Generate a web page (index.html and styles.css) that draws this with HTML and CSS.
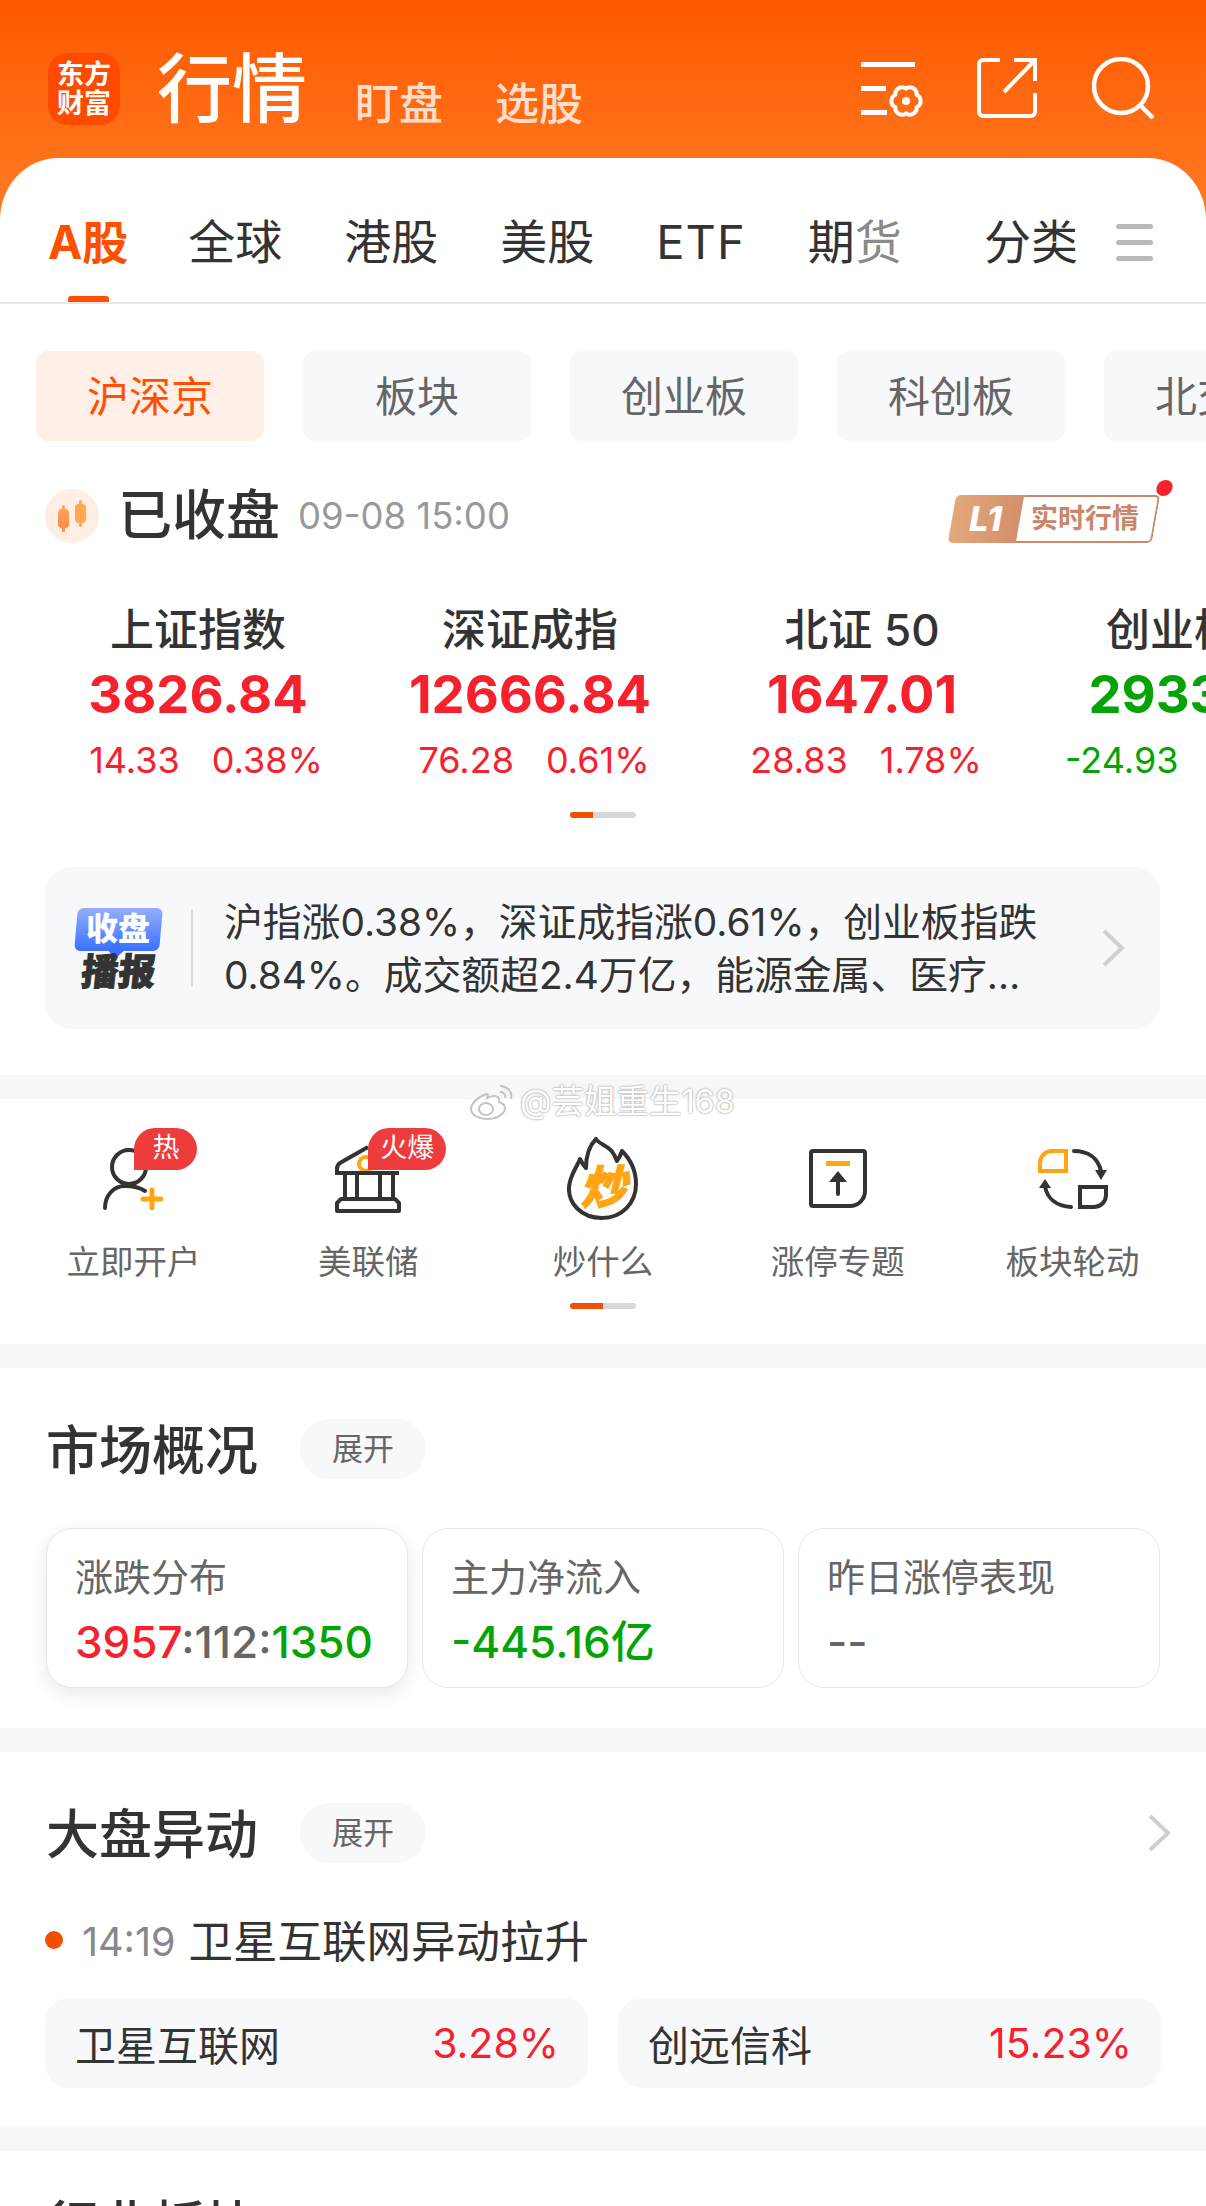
FILE: index.html
```html
<!DOCTYPE html>
<html lang="zh-CN">
<head>
    <meta charset="UTF-8">
    <meta name="viewport" content="width=device-width, initial-scale=1.0">
    <title>行情</title>
    <link rel="stylesheet" href="styles.css">
</head>
<body>
<div class="page">
    <div class="top">
        <div class="bar">
            <div class="logo">东方<br>财富</div>
            <div class="bar-title">行情</div>
            <div class="bar-link bar-link-first">盯盘</div>
            <div class="bar-link">选股</div>
            <div class="bar-icons">
                <svg class="icon-gear" width="64" height="58" viewBox="0 0 64 58" fill="none" stroke="#fff">
                    <path d="M0 2.5H54M0 26.5H25M0 50.500H26" stroke-width="5"/>
                    <g transform="translate(45 39)" stroke-width="4">
                        <path d="M0 -12.500A7 7 0 0 1 10.800 -6.250A7 7 0 0 1 10.800 6.250A7 7 0 0 1 0 12.500A7 7 0 0 1 -10.800 6.250A7 7 0 0 1 -10.800 -6.250A7 7 0 0 1 0 -12.500Z"/>
                        <circle r="4" fill="#fff" stroke="none"/>
                    </g>
                </svg>
                <svg class="icon-share" width="60" height="60" viewBox="0 0 60 60" fill="none" stroke="#fff" stroke-width="4">
                    <path d="M23 2H6A4 4 0 0 0 2 6V54A4 4 0 0 0 6 58H54A4 4 0 0 0 58 54V35"/>
                    <path d="M37 2H58V23M58 2L27 34"/>
                </svg>
                <svg class="icon-search" width="64" height="62" viewBox="0 0 64 62" fill="none" stroke="#fff" stroke-width="4.500">
                    <ellipse cx="29" cy="29" rx="27" ry="27"/>
                    <path d="M49 49L61 61"/>
                </svg>
            </div>
        </div>
        <div class="tabs">
            <div class="tab tab-active">A股</div>
            <div class="tab">全球</div>
            <div class="tab">港股</div>
            <div class="tab">美股</div>
            <div class="tab tab-latin">ETF</div>
            <div class="tab">期<span class="tab-fade">货</span></div>
            <div class="tab tab-more">分类</div>
            <div class="burger"><i></i><i></i><i></i></div>
        </div>
    </div>

    <section class="quotes">
        <div class="pills">
            <div class="pill pill-active">沪深京</div>
            <div class="pill">板块</div>
            <div class="pill">创业板</div>
            <div class="pill">科创板</div>
            <div class="pill">北交所</div>
        </div>

        <div class="status">
            <div class="candle-icon">
                <svg width="54" height="54" viewBox="0 0 54 54">
                    <defs>
                        <linearGradient id="candleA" x1="0" y1="0" x2="0" y2="1"><stop offset="0" stop-color="#ffa45c"/><stop offset="1" stop-color="#ff8a45"/></linearGradient>
                    </defs>
                    <rect x="13" y="20" width="11" height="19" rx="4" fill="url(#candleA)"/>
                    <rect x="17" y="16" width="3" height="27" rx="1.500" fill="url(#candleA)"/>
                    <rect x="30" y="15" width="11" height="19" rx="4" fill="#ffa850"/>
                    <rect x="34" y="11" width="3" height="27" rx="1.500" fill="#ffa850"/>
                </svg>
            </div>
            <div class="status-text">已收盘</div>
            <div class="status-time">09-08 15:00</div>
            <div class="level-badge">
                <div class="level-left"><span>L1</span></div>
                <div class="level-right"><span>实时行情</span></div>
                <div class="level-dot"></div>
            </div>
        </div>

        <div class="indexes">
            <div class="index up">
                <div class="index-name">上证指数</div>
                <div class="index-value">3826.84</div>
                <div class="index-sub"><span>14.33</span><span>0.38%</span></div>
            </div>
            <div class="index up">
                <div class="index-name">深证成指</div>
                <div class="index-value">12666.84</div>
                <div class="index-sub"><span>76.28</span><span>0.61%</span></div>
            </div>
            <div class="index up">
                <div class="index-name">北证 50</div>
                <div class="index-value">1647.01</div>
                <div class="index-sub"><span>28.83</span><span>1.78%</span></div>
            </div>
            <div class="index down">
                <div class="index-name">创业板指</div>
                <div class="index-value">2933.62</div>
                <div class="index-sub"><span>-24.93</span><span>-0.84%</span></div>
            </div>
        </div>

        <div class="slider slider-index"><i></i></div>

        <div class="report">
            <div class="report-logo">
                <div class="report-bubble"><span>收盘</span></div>
                <div class="report-word">播报</div>
            </div>
            <div class="report-line"></div>
            <div class="report-text">沪指涨0.38%，深证成指涨0.61%，创业板指跌0.84%。成交额超2.4万亿，能源金属、医疗…</div>
            <svg class="chevron" width="24" height="38" viewBox="0 0 24 38" fill="none" stroke="#d0d0d0" stroke-width="4">
                <path d="M3 2L21 19L3 36"/>
            </svg>
        </div>
    </section>

    <div class="band"></div>

    <section class="shortcuts">
        <div class="watermark">
            <svg width="46" height="36" viewBox="0 0 46 36" fill="#fff" stroke="#c4c4c4" stroke-width="2">
                <path d="M18 10C8 13 2 20 2 25C2 31 10 35 19 35C29 35 36 29 36 24C36 20 32 19 30 18C31 14 29 12 25 12C22 12 20 13 18 14C19 11 19 10 18 10Z"/>
                <ellipse cx="17" cy="25" rx="7" ry="6"/>
                <path d="M31 2C38 2 44 8 42 15M31 8C35 8 37 11 36 14" fill="none"/>
            </svg>
            <span>@芸姐重生168</span>
        </div>
        <div class="shortcut-row">
            <div class="shortcut">
                <div class="shortcut-icon">
                    <svg width="60" height="62" viewBox="0 0 60 62" fill="none" stroke="#333" stroke-width="4" stroke-linecap="round">
                        <circle cx="26" cy="19" r="17"/>
                        <path d="M2 60C2 48 10 38 22 38C30 38 36 39 42 43"/>
                        <path d="M49 42V60M40 51H58" stroke="#ffa514" stroke-width="5"/>
                    </svg>
                    <div class="hot-tag hot-one">热</div>
                </div>
                <div class="shortcut-label">立即开户</div>
            </div>
            <div class="shortcut">
                <div class="shortcut-icon">
                    <svg width="66" height="68" viewBox="0 0 66 68" fill="none" stroke="#333" stroke-width="4">
                        <circle cx="31" cy="19" r="7" stroke="#ffa514" stroke-width="4"/>
                        <path d="M33 2L5 18Q2 20 2 24V28H64"/>
                        <path d="M10 28V54M22 28V54M45 28V54M58 28V54"/>
                        <path d="M6 54H60L64 58V66H2V58Z" stroke-linejoin="round"/>
                    </svg>
                    <div class="hot-tag hot-two">火爆</div>
                </div>
                <div class="shortcut-label">美联储</div>
            </div>
            <div class="shortcut">
                <div class="shortcut-icon">
                    <svg width="72" height="84" viewBox="0 0 72 84" fill="none">
                        <path d="M35 81C14 81 1 66 2 50C3 38 10 30 13 22C15 26 17 29 19 31C19 20 22 9 29 2C33 8 42 9 46 16C48 19 49 22 50 24C52 21 54 17 55 14C63 22 69 34 69 47C69 66 55 81 35 81Z" stroke="#333" stroke-width="4" stroke-linejoin="round"/>
                        <text class="flame-word" x="36" y="67" text-anchor="middle">炒</text>
                    </svg>
                </div>
                <div class="shortcut-label">炒什么</div>
            </div>
            <div class="shortcut">
                <div class="shortcut-icon">
                    <svg width="58" height="60" viewBox="0 0 58 60" fill="none">
                        <path d="M4 2H54A2 2 0 0 1 56 4V42A15 15 0 0 1 41 57H4A2 2 0 0 1 2 55V4A2 2 0 0 1 4 2Z" stroke="#333" stroke-width="4"/>
                        <path d="M17 14.500H41" stroke="#ffa514" stroke-width="5"/>
                        <path d="M29 30V45" stroke="#333" stroke-width="4" stroke-linecap="round"/>
                        <path d="M20 33L29 22L38 33Z" fill="#333"/>
                    </svg>
                </div>
                <div class="shortcut-label">涨停专题</div>
            </div>
            <div class="shortcut">
                <div class="shortcut-icon">
                    <svg width="70" height="60" viewBox="0 0 70 60" fill="none">
                        <path d="M28 2H14A12 12 0 0 0 2 14V22H28Z" stroke="#ffa514" stroke-width="4"/>
                        <path d="M42 38H68V46A12 12 0 0 1 56 58H42Z" stroke="#333" stroke-width="4"/>
                        <path d="M36 2C50 2 60 9 63 22" stroke="#333" stroke-width="4" stroke-linecap="round"/>
                        <path d="M57 21H69L63 31Z" fill="#333"/>
                        <path d="M33 58C19 57 9 50 7 37" stroke="#333" stroke-width="4" stroke-linecap="round"/>
                        <path d="M1 39L7 30L13 39Z" fill="#333"/>
                    </svg>
                </div>
                <div class="shortcut-label">板块轮动</div>
            </div>
        </div>
        <div class="slider slider-short"><i></i></div>
    </section>

    <div class="band"></div>

    <section class="block block-market">
        <div class="block-head">
            <h2>市场概况</h2>
            <div class="expand">展开</div>
        </div>
        <div class="market-cards">
            <div class="market-card market-card-on">
                <div class="market-title">涨跌分布</div>
                <div class="market-value"><span class="red">3957</span><span class="grey">:112:</span><span class="green">1350</span></div>
            </div>
            <div class="market-card">
                <div class="market-title">主力净流入</div>
                <div class="market-value green">-445.16亿</div>
            </div>
            <div class="market-card">
                <div class="market-title">昨日涨停表现</div>
                <div class="market-value grey">--</div>
            </div>
        </div>
    </section>

    <div class="band"></div>

    <section class="block block-move">
        <div class="block-head">
            <h2>大盘异动</h2>
            <div class="expand">展开</div>
            <svg class="chevron chevron-head" width="24" height="38" viewBox="0 0 24 38" fill="none" stroke="#cfcfcf" stroke-width="4">
                <path d="M3 2L21 19L3 36"/>
            </svg>
        </div>
        <div class="event">
            <i class="event-dot"></i>
            <span class="event-time">14:19</span>
            <span class="event-title">卫星互联网异动拉升</span>
        </div>
        <div class="chips">
            <div class="chip"><span>卫星互联网</span><span class="red">3.28%</span></div>
            <div class="chip"><span>创远信科</span><span class="red">15.23%</span></div>
        </div>
    </section>

    <div class="band"></div>

    <section class="block block-next">
        <h2>行业板块</h2>
    </section>
</div>
</body>
</html>
```

FILE: styles.css
```css
* { box-sizing: border-box; }
html, body { margin: 0; padding: 0; background: #fff; }
body { font-family: Inter, "Noto Sans CJK SC", sans-serif; color: #333; }
.page { width: 1206px; height: 2206px; overflow: hidden; }

/* header */
.top { background: linear-gradient(#ff5900, #ff7c24) no-repeat; background-size: 100% 222px; }
.bar { height: 158px; display: flex; align-items: flex-start; padding: 53px 0 0 48px; color: #fff; }
.logo { width: 72px; height: 72px; background: #ff4b00; border-radius: 19px; font-size: 27px; line-height: 29px; font-weight: 700; text-align: center; padding-top: 7px; }
.bar-title { margin-left: 37px; font-size: 75px; line-height: 72px; font-weight: 500; }
.bar-link { margin: 27px 0 0 52px; font-size: 44px; line-height: 48px; font-weight: 500; color: #ffdecb; }
.bar-link-first { margin-left: 48px; }
.bar-icons { position: relative; margin-left: auto; display: flex; align-items: flex-start; padding-right: 50px; }
.icon-gear { margin-top: 9px; }
.icon-share { margin: 5px 0 0 52px; }
.icon-search { margin: 4px 0 0 55px; }

.tabs { height: 146px; background: #fff; border-radius: 58px 58px 0 0 / 62px 62px 0 0; border-bottom: 2px solid #e8e8e8; display: flex; align-items: center; gap: 62px; padding: 0 53px 0 48px; }
.tab { position: relative; font-size: 47px; line-height: 60px; color: #333; white-space: nowrap; margin-top: 24px; }
.tab-active { font-size: 46px; color: #ff5000; font-weight: 700; margin-right: -2px; }
.tab-active::after { content: ""; position: absolute; left: 20px; bottom: -30px; width: 41px; height: 6px; border-radius: 3px 3px 0 0; background: #ff5000; }
.tab-latin { letter-spacing: 1px; }
.tab-fade { color: #8a8a8a; }
.tab-more { margin-left: auto; }
.burger { display: flex; flex-direction: column; gap: 11px; margin: 24px 0 0 -24px; }
.burger i { display: block; width: 37px; height: 5px; border-radius: 3px; background: #b9b9b9; }

/* quotes */
.quotes { padding-top: 47px; }
.pills { display: flex; gap: 39px; padding-left: 36px; overflow: hidden; }
.pill { flex: 0 0 228px; height: 90px; border-radius: 12px; background: #f7f8fa; color: #666; font-size: 42px; line-height: 92px; text-align: center; }
.pill-active { background: #ffefe7; color: #ff5000; }

.status { display: flex; align-items: center; height: 54px; margin: 48px 46px 0 45px; }
.candle-icon { width: 54px; height: 54px; border-radius: 50%; background: #ffeee4; }
.candle-icon svg { display: block; }
.status-text { margin-left: 19px; font-size: 54px; line-height: 56px; font-weight: 500; }
.status-time { margin-left: 18px; font-size: 36.500px; color: #999; }
.level-badge { position: relative; margin-left: auto; display: flex; width: 204px; height: 48px; transform: skewX(-10deg); margin-right: 4px; margin-top: 5px; }
.level-left { width: 68px; background: linear-gradient(90deg, #e3a87a, #d3906c); border-radius: 5px 0 0 5px; color: #fff; font-size: 34px; font-weight: 800; line-height: 48px; text-align: center; }
.level-right { flex: 1; padding-right: 5px; border: 2px solid #c98a6c; border-left: 0; border-radius: 0 5px 5px 0; color: #c9866a; font-size: 27px; line-height: 44px; font-weight: 700; text-align: center; }
.level-right span { display: inline-block; transform: skewX(10deg); }
.level-dot { position: absolute; right: -11px; top: -15px; width: 16px; height: 16px; border-radius: 50%; background: #f5222d; }

.indexes { display: flex; margin-top: 42px; padding: 20px 0 0 32px; overflow: hidden; }
.index { flex: 0 0 332px; text-align: center; }
.index:first-child .index-sub { padding-left: 16px; }
.index-name { font-size: 44px; line-height: 50px; font-weight: 500; color: #333; white-space: nowrap; }
.index-value { margin-top: 9px; font-size: 52.500px; line-height: 60px; font-weight: 700; white-space: nowrap; }
.index-sub { display: flex; justify-content: center; gap: 32px; margin-top: 14px; padding-left: 8px; font-size: 36px; line-height: 44px; white-space: nowrap; }
.up .index-value, .up .index-sub { color: #f5222d; }
.down .index-value, .down .index-sub { color: #06a306; }
.down .index-value { padding-left: 6px; }
.down .index-sub { justify-content: flex-start; padding-left: 37px; }

.slider { width: 66px; height: 6px; border-radius: 3px; background: #d5d8dc; overflow: hidden; margin: 0 auto; }
.slider i { display: block; width: 23px; height: 6px; background: #f05000; }
.slider-index { margin-top: 30px; }
.slider-short { margin-top: 19px; }
.slider-short i { width: 33px; }

.report { display: flex; align-items: center; height: 162px; margin: 49px 46px 46px 45px; padding: 0 35px 0 31px; border-radius: 26px; background: #f7f8fa; }
.report-logo { flex: 0 0 85px; }
.report-bubble { position: relative; height: 43px; background: linear-gradient(#93aeff, #3a70ff); border-radius: 6px; transform: skewX(-5deg); color: #fff; font-size: 32px; font-weight: 900; line-height: 42px; text-align: center; }
.report-bubble span { display: inline-block; transform: skewX(5deg); }
.report-bubble::after { content: ""; position: absolute; left: 36px; bottom: -5px; width: 12px; height: 12px; background: #3a70ff; transform: rotate(45deg); z-index: -1; }
.report-word { margin-top: 5px; font-size: 37px; line-height: 32px; font-weight: 900; color: #333; white-space: nowrap; transform: skewX(-6deg); text-align: center; -webkit-text-stroke: 1px #333; }
.report-line { flex: 0 0 2px; height: 78px; margin: 0 31px 0 30px; background: #dcdcdc; }
.report-text { flex: 1; font-size: 38.800px; line-height: 53px; color: #333; }
.chevron { display: block; flex: 0 0 24px; }

.band { height: 24px; background: #f6f7f9; }

/* shortcuts */
.shortcuts { position: relative; height: 245px; padding: 36px 16px 0; }
.shortcut-row { display: grid; grid-template-columns: repeat(5, 1fr); }
.shortcut { display: flex; flex-direction: column; align-items: center; }
.shortcut-icon { position: relative; height: 88px; display: flex; align-items: center; justify-content: center; }
.shortcut-icon svg { display: block; }
.shortcut-label { margin-top: 17px; font-size: 33.500px; line-height: 44px; color: #666; white-space: nowrap; }
.flame-word { font-size: 46px; font-weight: 900; fill: #ffa514; stroke: #ffa514; stroke-width: 1px; font-style: italic; }
.hot-tag { position: absolute; top: -7px; height: 42px; border-radius: 21px 21px 21px 0; background: #ee3b3b; color: #fff; font-size: 27px; line-height: 40px; text-align: center; white-space: nowrap; }
.hot-one { left: 31px; width: 63px; }
.hot-two { left: 33px; width: 78px; }
.watermark { position: absolute; left: 469px; top: -15px; display: flex; align-items: center; gap: 5px; font-size: 32.500px; line-height: 36px; color: #fff; z-index: 2; text-shadow: 0 0 2px #aaa, 0 0 2px #aaa; }
.watermark svg { display: block; }

/* sections */
.block { padding: 51px 45px 0 46px; }
.block h2 { margin: 4px 0 0; font-size: 53px; line-height: 60px; font-weight: 500; color: #333; }
.block-head { display: flex; align-items: center; height: 60px; }
.expand { width: 126px; height: 60px; margin-left: 42px; border-radius: 30px; background: #f7f8fa; color: #666; font-size: 31px; line-height: 60px; text-align: center; }
.block-market { height: 360px; }
.market-cards { display: flex; gap: 14px; margin-top: 49px; }
.market-card { flex: 0 0 362px; height: 160px; padding: 24px 28px 0; border: 1px solid #e8e8e8; border-radius: 26px; background: #fff; }
.market-card-on { box-shadow: 0 6px 18px rgba(0, 0, 0, 0.09); }
.market-title { font-size: 38px; line-height: 48px; color: #666; white-space: nowrap; }
.market-value { margin-top: 15px; font-size: 44px; line-height: 52px; font-weight: 500; white-space: nowrap; }
.red { color: #f5222d; }
.green { color: #06a306; }
.grey { color: #666; }

.block-move { height: 375px; }
.chevron-head { margin-left: auto; margin-right: -10px; }
.event { display: flex; align-items: center; height: 44px; margin-top: 57px; }
.event-dot { width: 18px; height: 18px; border-radius: 50%; background: #f05000; margin-left: -1px; margin-top: -4px; }
.event-time { margin-left: 19px; font-size: 39.500px; color: #888; }
.event-title { margin-left: 13px; font-size: 44.500px; line-height: 44px; color: #333; white-space: nowrap; }
.chips { display: flex; gap: 30px; margin-top: 34px; margin-left: -1px; }
.chip { flex: 1; display: flex; justify-content: space-between; align-items: center; height: 90px; padding: 0 29px 0 30px; border-radius: 24px; background: #f7f8fa; font-size: 41px; color: #333; }

.block-next { padding-top: 41px; }
```
